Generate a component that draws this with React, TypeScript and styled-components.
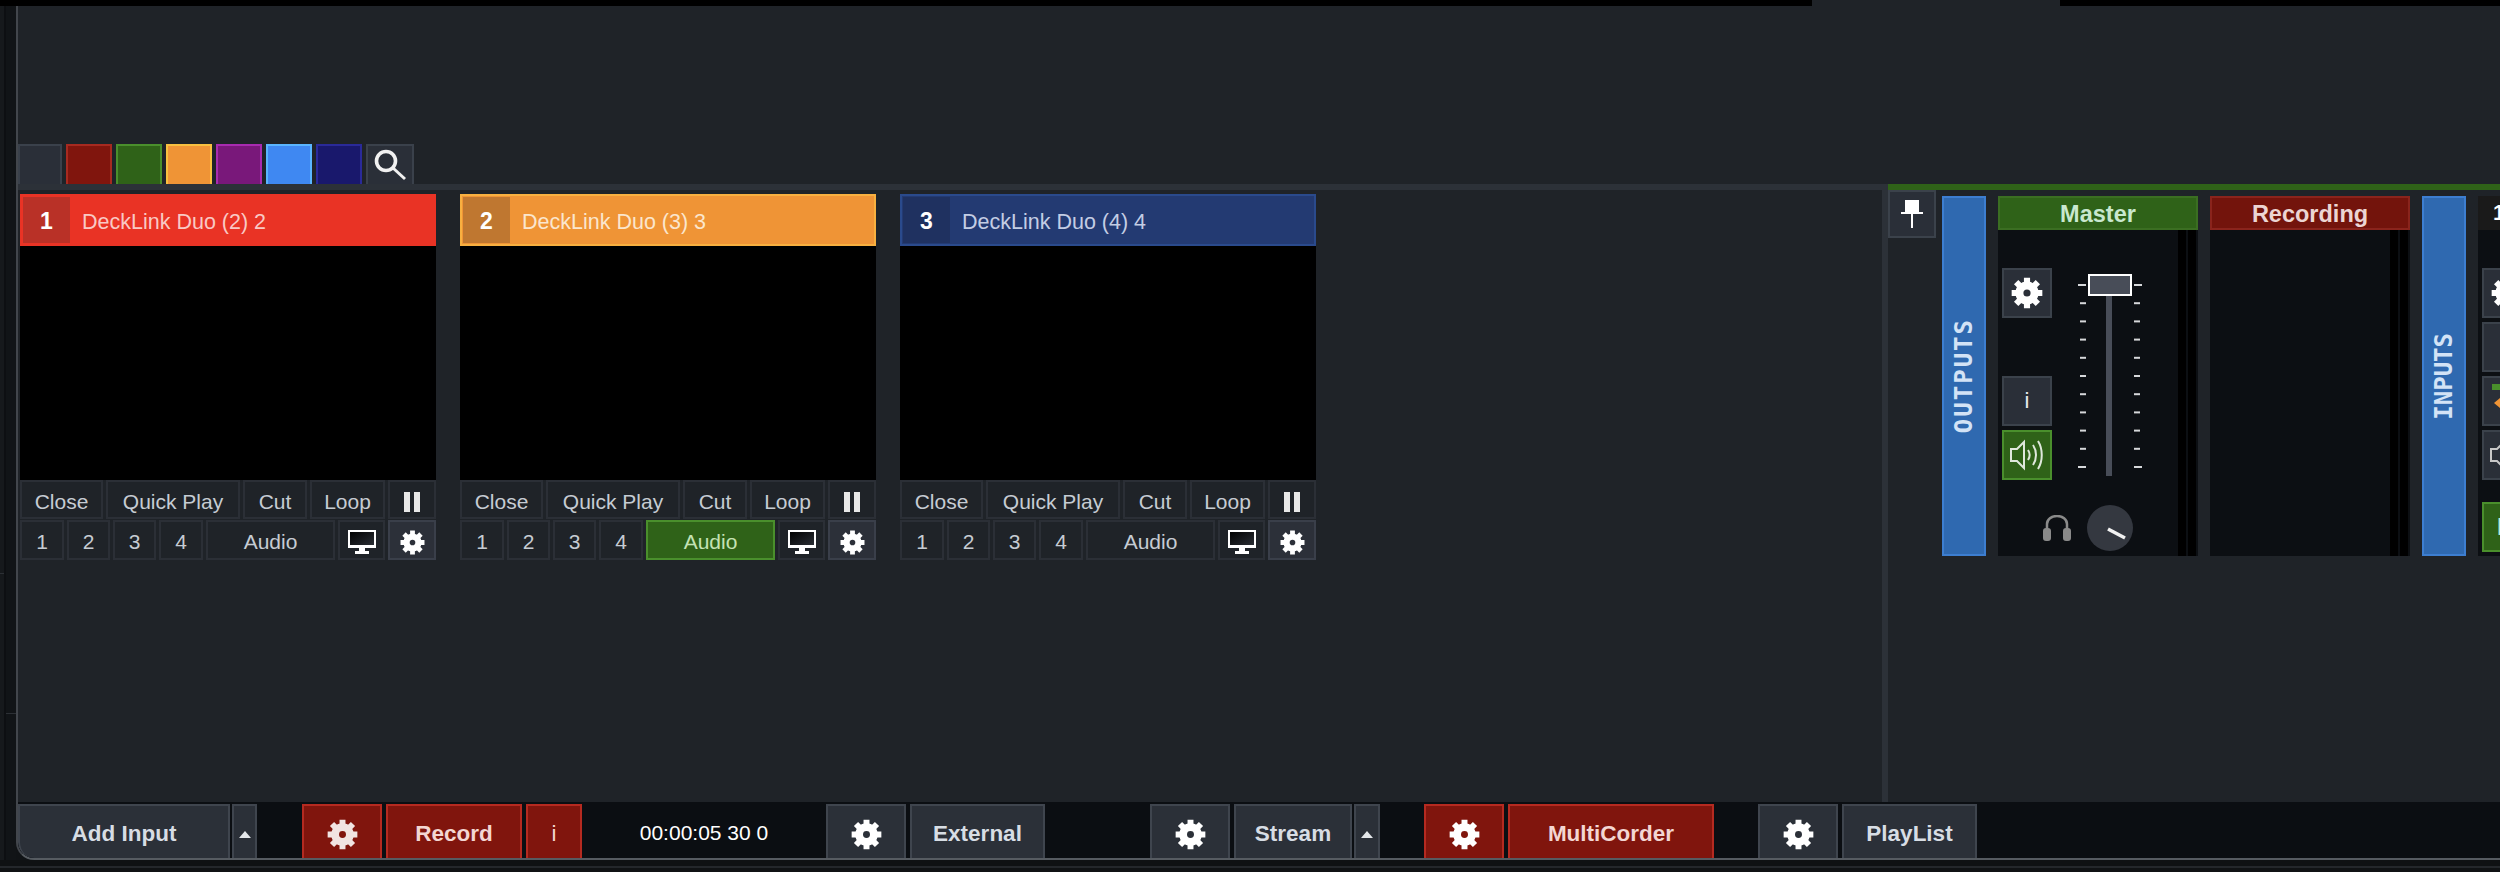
import React from "react";
import styled, { createGlobalStyle } from "styled-components";

const GlobalStyle = createGlobalStyle`
  html, body {
    margin: 0;
    padding: 0;
    background: #0d0f12;
  }
  * {
    box-sizing: border-box;
  }
`;

const Page = styled.div`
  width: 2500px;
  height: 872px;
  display: flex;
  flex-direction: column;
  overflow: hidden;
  background: #101316;
  font-family: "Liberation Sans", Arial, sans-serif;
  font-size: 21px;
  color: #c6ccd3;
`;

const TopStrip = styled.div`
  height: 6px;
  flex: none;
  display: flex;
  background: #1f2328;
`;

const TopBlack = styled.div<{ $w: number }>`
  width: ${(p) => p.$w}px;
  margin-right: ${(p) => (p.$w === 1812 ? 248 : 0)}px;
  background: #000;
`;

const Workspace = styled.div`
  height: 854px;
  flex: none;
  display: flex;
`;

const LeftRail = styled.div`
  width: 16px;
  flex: none;
  display: flex;
  background: #111417;
`;

const RailLeft = styled.div`
  width: 6px;
  background: #16191c;
  border-right: 2px solid #0d0f12;
`;

const RailNotch = styled.div<{ $top: number }>`
  height: 1px;
  margin-top: ${(p) => p.$top}px;
  background: #2c3035;
`;

const RailRight = styled.div`
  flex: 1;
`;

const Main = styled.div`
  flex: 1;
  min-width: 0;
  display: flex;
  flex-direction: column;
  background: #1f2328;
  border-left: 2px solid #42464c;
  border-bottom: 2px solid #565b61;
  border-bottom-left-radius: 18px;
  overflow: hidden;
`;

const TabRow = styled.div`
  height: 178px;
  flex: none;
  display: flex;
  align-items: flex-end;
  gap: 4px;
`;

const ColorTab = styled.div<{ $bg: string; $edge: string; $w?: number }>`
  width: ${(p) => p.$w ?? 46}px;
  height: 40px;
  display: flex;
  align-items: center;
  justify-content: center;
  background: ${(p) => p.$bg};
  border: 2px solid ${(p) => p.$edge};
  border-bottom: none;
`;

const Band = styled.div`
  height: 6px;
  flex: none;
  display: flex;
  background: #2f6218;
`;

const BandLeft = styled.div`
  width: 1870px;
  background: #2c3138;
`;

const Content = styled.div`
  height: 612px;
  flex: none;
  display: flex;
`;

const Decks = styled.div`
  width: 1864px;
  flex: none;
  display: flex;
  align-items: flex-start;
  gap: 24px;
  padding: 4px 0 0 2px;
`;

const Card = styled.div`
  width: 416px;
  flex: none;
`;

const CardHeader = styled.div<{ $bg: string; $edge: string; $text: string }>`
  height: 52px;
  display: flex;
  align-items: stretch;
  padding: 1px;
  background: ${(p) => p.$bg};
  border: 2px solid ${(p) => p.$edge};
  color: ${(p) => p.$text};
  font-size: 21.5px;
`;

const CardNumber = styled.div<{ $bg: string }>`
  width: 47px;
  flex: none;
  padding-top: 3px;
  display: flex;
  align-items: center;
  justify-content: center;
  background: ${(p) => p.$bg};
  color: #fff;
  font-weight: bold;
  font-size: 23px;
`;

const CardTitle = styled.div`
  margin-left: 12px;
  padding-top: 4px;
  display: flex;
  align-items: center;
  white-space: nowrap;
`;

const Video = styled.div`
  height: 234px;
  background: #000;
`;

const ControlRow = styled.div<{ $h: number; $mb?: number }>`
  height: ${(p) => p.$h}px;
  margin-bottom: ${(p) => p.$mb ?? 0}px;
  display: flex;
  gap: 3px;
`;

const CtlButton = styled.div<{ $w: number; $variant?: "on" | "raised" }>`
  width: ${(p) => p.$w}px;
  flex: none;
  padding-top: 4px;
  display: flex;
  align-items: center;
  justify-content: center;
  background: ${(p) =>
    p.$variant === "on" ? "#2f6218" : p.$variant === "raised" ? "#2c3039" : "#1f2328"};
  border: 2px solid
    ${(p) =>
      p.$variant === "on" ? "#4a8f2c" : p.$variant === "raised" ? "#3a3f4a" : "#2b2f36"};
  color: ${(p) => (p.$variant === "on" ? "#c4e2b4" : "#c6ccd3")};
`;

const Divider = styled.div`
  width: 6px;
  flex: none;
  background: #2c3138;
`;

const Mixer = styled.div`
  flex: 1;
  min-width: 0;
  display: flex;
  align-items: flex-start;
  overflow: hidden;
`;

const PinButton = styled.div`
  width: 48px;
  height: 48px;
  flex: none;
  display: flex;
  align-items: center;
  justify-content: center;
  background: #2a2f38;
  border: 2px solid #3b424b;
`;

const SideTab = styled.div<{ $ml: number }>`
  width: 44px;
  height: 360px;
  flex: none;
  margin: 6px 0 0 ${(p) => p.$ml}px;
  display: flex;
  align-items: center;
  justify-content: center;
  background: #2f69b0;
  border: 2px solid #3d7ed0;
`;

const SideLabel = styled.span<{ $spacing: number }>`
  writing-mode: vertical-rl;
  transform: rotate(180deg);
  font-family: "DejaVu Sans Mono", "Liberation Mono", monospace;
  font-weight: bold;
  font-size: 24px;
  letter-spacing: ${(p) => p.$spacing}px;
  color: #d3e3f6;
`;

const Strip = styled.div<{ $w?: number }>`
  width: ${(p) => p.$w ?? 200}px;
  flex: none;
  margin: 6px 0 0 12px;
`;

const StripHeader = styled.div<{ $bg: string; $edge: string; $text: string }>`
  height: 34px;
  padding-top: 2px;
  display: flex;
  align-items: center;
  justify-content: center;
  background: ${(p) => p.$bg};
  border: 2px solid ${(p) => p.$edge};
  color: ${(p) => p.$text};
  font-weight: bold;
  font-size: 23.5px;
`;

const CutHeader = styled.div`
  height: 34px;
  padding-left: 15px;
  display: flex;
  align-items: center;
  background: #1a1a1a;
  color: #fff;
  font-weight: bold;
  font-size: 22px;
`;

const StripBody = styled.div`
  height: 326px;
  display: flex;
  background: #0c0f13;
`;

const StripMain = styled.div`
  flex: 1;
  min-width: 0;
`;

const UpperRow = styled.div`
  height: 250px;
  display: flex;
`;

const ButtonColumn = styled.div`
  width: 50px;
  flex: none;
  margin-left: 4px;
  padding-top: 38px;
  display: flex;
  flex-direction: column;
  gap: 4px;
`;

const SquareButton = styled.div<{ $variant?: "on" | "ghost"; $mt?: number }>`
  width: 50px;
  height: 50px;
  flex: none;
  margin-top: ${(p) => p.$mt ?? 0}px;
  display: flex;
  align-items: center;
  justify-content: center;
  background: ${(p) =>
    p.$variant === "on" ? "#2f6218" : p.$variant === "ghost" ? "transparent" : "#2a2f38"};
  border: 2px solid
    ${(p) =>
      p.$variant === "on" ? "#4a8f2c" : p.$variant === "ghost" ? "transparent" : "#3b424b"};
  color: ${(p) => (p.$variant === "on" ? "#b7ecd6" : "#e6e9ee")};
  font-size: 22px;
`;

const MixLetter = styled.span`
  font-weight: bold;
  font-size: 24px;
`;

const FaderSlot = styled.div`
  margin: 44px 0 0 26px;
  display: flex;
  align-items: flex-start;
`;

const LowerRow = styled.div`
  margin-top: 25px;
  padding-left: 44px;
  display: flex;
  align-items: center;
  gap: 15px;
`;

const Meter = styled.div`
  width: 20px;
  flex: none;
  display: flex;
  gap: 2px;
`;

const MeterBar = styled.div`
  width: 8px;
  background: #000;
`;

const CutStripBody = styled.div`
  height: 326px;
  background: #0c0f13;
`;

const BottomBar = styled.div`
  height: 56px;
  flex: none;
  display: flex;
  align-items: stretch;
  padding-top: 2px;
  background: #0b0e12;
`;

const BarGroup = styled.div<{ $ml?: number; $gap?: number }>`
  margin-left: ${(p) => p.$ml ?? 0}px;
  display: flex;
  gap: ${(p) => p.$gap ?? 4}px;
`;

const BarButton = styled.div<{ $w: number; $red?: boolean; $round?: boolean }>`
  width: ${(p) => p.$w}px;
  padding-top: 4px;
  display: flex;
  align-items: center;
  justify-content: center;
  background: ${(p) => (p.$red ? "#80150d" : "#2b3038")};
  border: 2px solid ${(p) => (p.$red ? "#b52a20" : "#3f454e")};
  border-bottom: none;
  border-bottom-left-radius: ${(p) => (p.$round ? 16 : 0)}px;
  color: ${(p) => (p.$red ? "#f3d6d2" : "#d7dde4")};
  font-weight: bold;
  font-size: 22.5px;
`;

const PlainLetter = styled.span`
  font-weight: normal;
`;

const ArrowUp = styled.div`
  width: 0;
  height: 0;
  border-left: 6px solid transparent;
  border-right: 6px solid transparent;
  border-bottom: 7px solid #e4e7ea;
`;

const TimeCode = styled.div`
  width: 244px;
  padding-top: 3px;
  display: flex;
  align-items: center;
  justify-content: center;
  color: #fff;
  font-size: 21px;
`;

const FootStrip = styled.div`
  height: 12px;
  flex: none;
  background: #101214;
  border-top: 6px solid #0f1113;
`;

const FootLine = styled.div`
  height: 2px;
  background: #24272b;
`;

function Gear({ size, color = "#fff" }: { size: number; color?: string }) {
  const teeth = [0, 45, 90, 135];
  return (
    <svg width={size} height={size} viewBox="0 0 24 24">
      <circle cx="12" cy="12" r="5.7" fill="none" stroke={color} strokeWidth="6" />
      {teeth.map((a) => (
        <line
          key={a}
          x1="12"
          y1="0.5"
          x2="12"
          y2="23.5"
          stroke={color}
          strokeWidth="4.6"
          strokeDasharray="5 13 5"
          transform={`rotate(${a} 12 12)`}
        />
      ))}
    </svg>
  );
}

function Monitor() {
  return (
    <svg width="28" height="24" viewBox="0 0 28 24">
      <defs>
        <linearGradient id="screen" x1="0" y1="0" x2="1" y2="1">
          <stop offset="0" stopColor="#000" />
          <stop offset="1" stopColor="#2b2f36" />
        </linearGradient>
      </defs>
      <rect x="1" y="1" width="26" height="15" fill="url(#screen)" stroke="#fff" strokeWidth="2" />
      <rect x="0" y="16" width="28" height="2" fill="#fff" />
      <rect x="11" y="18" width="6" height="3" fill="#fff" />
      <rect x="7" y="21" width="14" height="3" fill="#fff" />
    </svg>
  );
}

function Pause() {
  return (
    <svg width="18" height="20" viewBox="0 0 18 20">
      <rect x="1" y="0" width="6" height="20" fill="#e8e8e8" />
      <rect x="11" y="0" width="6" height="20" fill="#e8e8e8" />
    </svg>
  );
}

function Search() {
  return (
    <svg width="34" height="34" viewBox="0 0 34 34">
      <circle cx="13" cy="13" r="9.5" fill="none" stroke="#f1f1f1" strokeWidth="3.6" />
      <line x1="20" y1="20" x2="32" y2="31" stroke="#f1f1f1" strokeWidth="3" />
    </svg>
  );
}

function Pin() {
  return (
    <svg width="22" height="28" viewBox="0 0 22 28">
      <rect x="4" y="0" width="14" height="12" fill="#fff" />
      <rect x="0" y="12" width="22" height="2" fill="#fff" />
      <rect x="10" y="14" width="2" height="14" fill="#fff" />
    </svg>
  );
}

function Speaker({ color = "#dfe8dc" }: { color?: string }) {
  return (
    <svg width="34" height="32" viewBox="0 0 34 32" fill="none" stroke={color} strokeWidth="2">
      <path d="M1 10h6l7-7v26l-7-7H1z" />
      <path d="M18 11c2 3 2 7 0 10" />
      <path d="M23 6c4 6 4 14 0 20" />
      <path d="M28 2c5 8 5 20 0 28" />
    </svg>
  );
}

function InfoGlyph() {
  return (
    <svg width="32" height="20" viewBox="0 0 32 20">
      <path d="M16 1h10M16 8h10M16 15h10" stroke="#1f2f78" strokeWidth="3" />
    </svg>
  );
}

function ColourGlyph() {
  return (
    <svg width="30" height="34" viewBox="0 0 30 34">
      <rect x="0" y="0" width="30" height="6" fill="#4a8f2c" />
      <path d="M15 8l13 11-13 11L2 19z" fill="#ef9436" />
    </svg>
  );
}

function Fader() {
  const ticks = Array.from({ length: 11 }, (_, i) => i);
  return (
    <svg width="64" height="202" viewBox="0 0 64 202">
      <rect x="28" y="20" width="6" height="182" fill="#484d58" />
      {ticks.map((i) => {
        const major = i === 0 || i === 10;
        const y = 10 + i * 18.2;
        return (
          <g key={i} fill="#d6d8da">
            <rect x={major ? 0 : 2} y={y} width={major ? 8 : 6} height="2" />
            <rect x="56" y={y} width={major ? 8 : 6} height="2" />
          </g>
        );
      })}
      <rect x="11" y="1" width="42" height="20" fill="#484d58" stroke="#fff" strokeWidth="2" />
    </svg>
  );
}

function Headphones() {
  return (
    <svg width="30" height="26" viewBox="0 0 30 26">
      <path d="M5 14V9a10 8 0 0 1 20 0v5" fill="none" stroke="#8a8a8a" strokeWidth="2.5" />
      <rect x="1" y="13" width="8" height="13" rx="3" fill="#8a8a8a" />
      <rect x="21" y="13" width="8" height="13" rx="3" fill="#8a8a8a" />
    </svg>
  );
}

function Knob() {
  return (
    <svg width="46" height="46" viewBox="0 0 46 46">
      <circle cx="23" cy="23" r="23" fill="#343840" />
      <line x1="21" y1="24" x2="38" y2="33" stroke="#f2f2f2" strokeWidth="3.5" />
    </svg>
  );
}

const decks = [
  {
    n: 1,
    title: "DeckLink Duo (2) 2",
    bg: "#e93325",
    edge: "#e93325",
    num: "#b93127",
    text: "#f9c9c4",
    audio: false,
  },
  {
    n: 2,
    title: "DeckLink Duo (3) 3",
    bg: "#ef9436",
    edge: "#f8b040",
    num: "#bf7730",
    text: "#fbe6cd",
    audio: true,
  },
  {
    n: 3,
    title: "DeckLink Duo (4) 4",
    bg: "#233a72",
    edge: "#2a4a8c",
    num: "#1f3160",
    text: "#c3cde4",
    audio: false,
  },
];

const tabs = [
  { bg: "#2a2f38", edge: "#3a414b", w: 44 },
  { bg: "#80150d", edge: "#a62a20" },
  { bg: "#2f6218", edge: "#4a8f2c" },
  { bg: "#ef9436", edge: "#f8c040" },
  { bg: "#79187a", edge: "#a82bb0" },
  { bg: "#3f88f2", edge: "#5ab5ff" },
  { bg: "#19186c", edge: "#2a2a99" },
];

export default function App() {
  return (
    <Page>
      <GlobalStyle />
      <TopStrip>
        <TopBlack $w={1812} />
        <TopBlack $w={440} />
      </TopStrip>
      <Workspace>
        <LeftRail>
          <RailLeft>
            <RailNotch $top={567} />
          </RailLeft>
          <RailRight>
            <RailNotch $top={707} />
          </RailRight>
        </LeftRail>
        <Main>
          <TabRow>
            {tabs.map((t) => (
              <ColorTab key={t.bg} $bg={t.bg} $edge={t.edge} $w={t.w} />
            ))}
            <ColorTab $bg="#2a2f38" $edge="#3a414b" $w={48}>
              <Search />
            </ColorTab>
          </TabRow>
          <Band>
            <BandLeft />
          </Band>
          <Content>
            <Decks>
              {decks.map((d) => (
                <Card key={d.n}>
                  <CardHeader $bg={d.bg} $edge={d.edge} $text={d.text}>
                    <CardNumber $bg={d.num}>{d.n}</CardNumber>
                    <CardTitle>{d.title}</CardTitle>
                  </CardHeader>
                  <Video />
                  <ControlRow $h={39} $mb={1}>
                    <CtlButton $w={83}>Close</CtlButton>
                    <CtlButton $w={134}>Quick Play</CtlButton>
                    <CtlButton $w={64}>Cut</CtlButton>
                    <CtlButton $w={75}>Loop</CtlButton>
                    <CtlButton $w={48}>
                      <Pause />
                    </CtlButton>
                  </ControlRow>
                  <ControlRow $h={40}>
                    <CtlButton $w={44}>1</CtlButton>
                    <CtlButton $w={43}>2</CtlButton>
                    <CtlButton $w={43}>3</CtlButton>
                    <CtlButton $w={44}>4</CtlButton>
                    <CtlButton $w={129} $variant={d.audio ? "on" : undefined}>
                      Audio
                    </CtlButton>
                    <CtlButton $w={47}>
                      <Monitor />
                    </CtlButton>
                    <CtlButton $w={48} $variant="raised">
                      <Gear size={25} />
                    </CtlButton>
                  </ControlRow>
                </Card>
              ))}
            </Decks>
            <Divider />
            <Mixer>
              <PinButton>
                <Pin />
              </PinButton>
              <SideTab $ml={6}>
                <SideLabel $spacing={2}>OUTPUTS</SideLabel>
              </SideTab>
              <Strip>
                <StripHeader $bg="#2f6218" $edge="#3b6e22" $text="#c9e8cf">
                  Master
                </StripHeader>
                <StripBody>
                  <StripMain>
                    <UpperRow>
                      <ButtonColumn>
                        <SquareButton>
                          <Gear size={32} />
                        </SquareButton>
                        <SquareButton $variant="ghost" />
                        <SquareButton>i</SquareButton>
                        <SquareButton $variant="on">
                          <Speaker />
                        </SquareButton>
                      </ButtonColumn>
                      <FaderSlot>
                        <Fader />
                      </FaderSlot>
                    </UpperRow>
                    <LowerRow>
                      <Headphones />
                      <Knob />
                    </LowerRow>
                  </StripMain>
                  <Meter>
                    <MeterBar />
                    <MeterBar />
                  </Meter>
                </StripBody>
              </Strip>
              <Strip>
                <StripHeader $bg="#73140c" $edge="#8a241c" $text="#ecd5d3">
                  Recording
                </StripHeader>
                <StripBody>
                  <StripMain />
                  <Meter>
                    <MeterBar />
                    <MeterBar />
                  </Meter>
                </StripBody>
              </Strip>
              <SideTab $ml={12}>
                <SideLabel $spacing={0}>INPUTS</SideLabel>
              </SideTab>
              <Strip $w={60}>
                <CutHeader>1</CutHeader>
                <CutStripBody>
                  <ButtonColumn>
                    <SquareButton>
                      <Gear size={32} />
                    </SquareButton>
                    <SquareButton>
                      <InfoGlyph />
                    </SquareButton>
                    <SquareButton>
                      <ColourGlyph />
                    </SquareButton>
                    <SquareButton>
                      <Speaker color="#c8c8c8" />
                    </SquareButton>
                    <SquareButton $variant="on" $mt={18}>
                      <MixLetter>M</MixLetter>
                    </SquareButton>
                  </ButtonColumn>
                </CutStripBody>
              </Strip>
            </Mixer>
          </Content>
          <BottomBar>
            <BarGroup $gap={2}>
              <BarButton $w={212} $round>
                Add Input
              </BarButton>
              <BarButton $w={25}>
                <ArrowUp />
              </BarButton>
            </BarGroup>
            <BarGroup $ml={45}>
              <BarButton $w={80} $red>
                <Gear size={31} color="#f1e4e2" />
              </BarButton>
              <BarButton $w={136} $red>
                Record
              </BarButton>
              <BarButton $w={56} $red>
                <PlainLetter>i</PlainLetter>
              </BarButton>
            </BarGroup>
            <TimeCode>00:00:05 30 0</TimeCode>
            <BarGroup>
              <BarButton $w={80}>
                <Gear size={31} />
              </BarButton>
              <BarButton $w={135}>External</BarButton>
            </BarGroup>
            <BarGroup $ml={105}>
              <BarButton $w={80}>
                <Gear size={31} />
              </BarButton>
              <BarGroup $gap={2}>
                <BarButton $w={118}>Stream</BarButton>
                <BarButton $w={26}>
                  <ArrowUp />
                </BarButton>
              </BarGroup>
            </BarGroup>
            <BarGroup $ml={44}>
              <BarButton $w={80} $red>
                <Gear size={31} />
              </BarButton>
              <BarButton $w={206} $red>
                MultiCorder
              </BarButton>
            </BarGroup>
            <BarGroup $ml={44}>
              <BarButton $w={80}>
                <Gear size={31} />
              </BarButton>
              <BarButton $w={135}>PlayList</BarButton>
            </BarGroup>
          </BottomBar>
        </Main>
      </Workspace>
      <FootStrip>
        <FootLine />
      </FootStrip>
    </Page>
  );
}
